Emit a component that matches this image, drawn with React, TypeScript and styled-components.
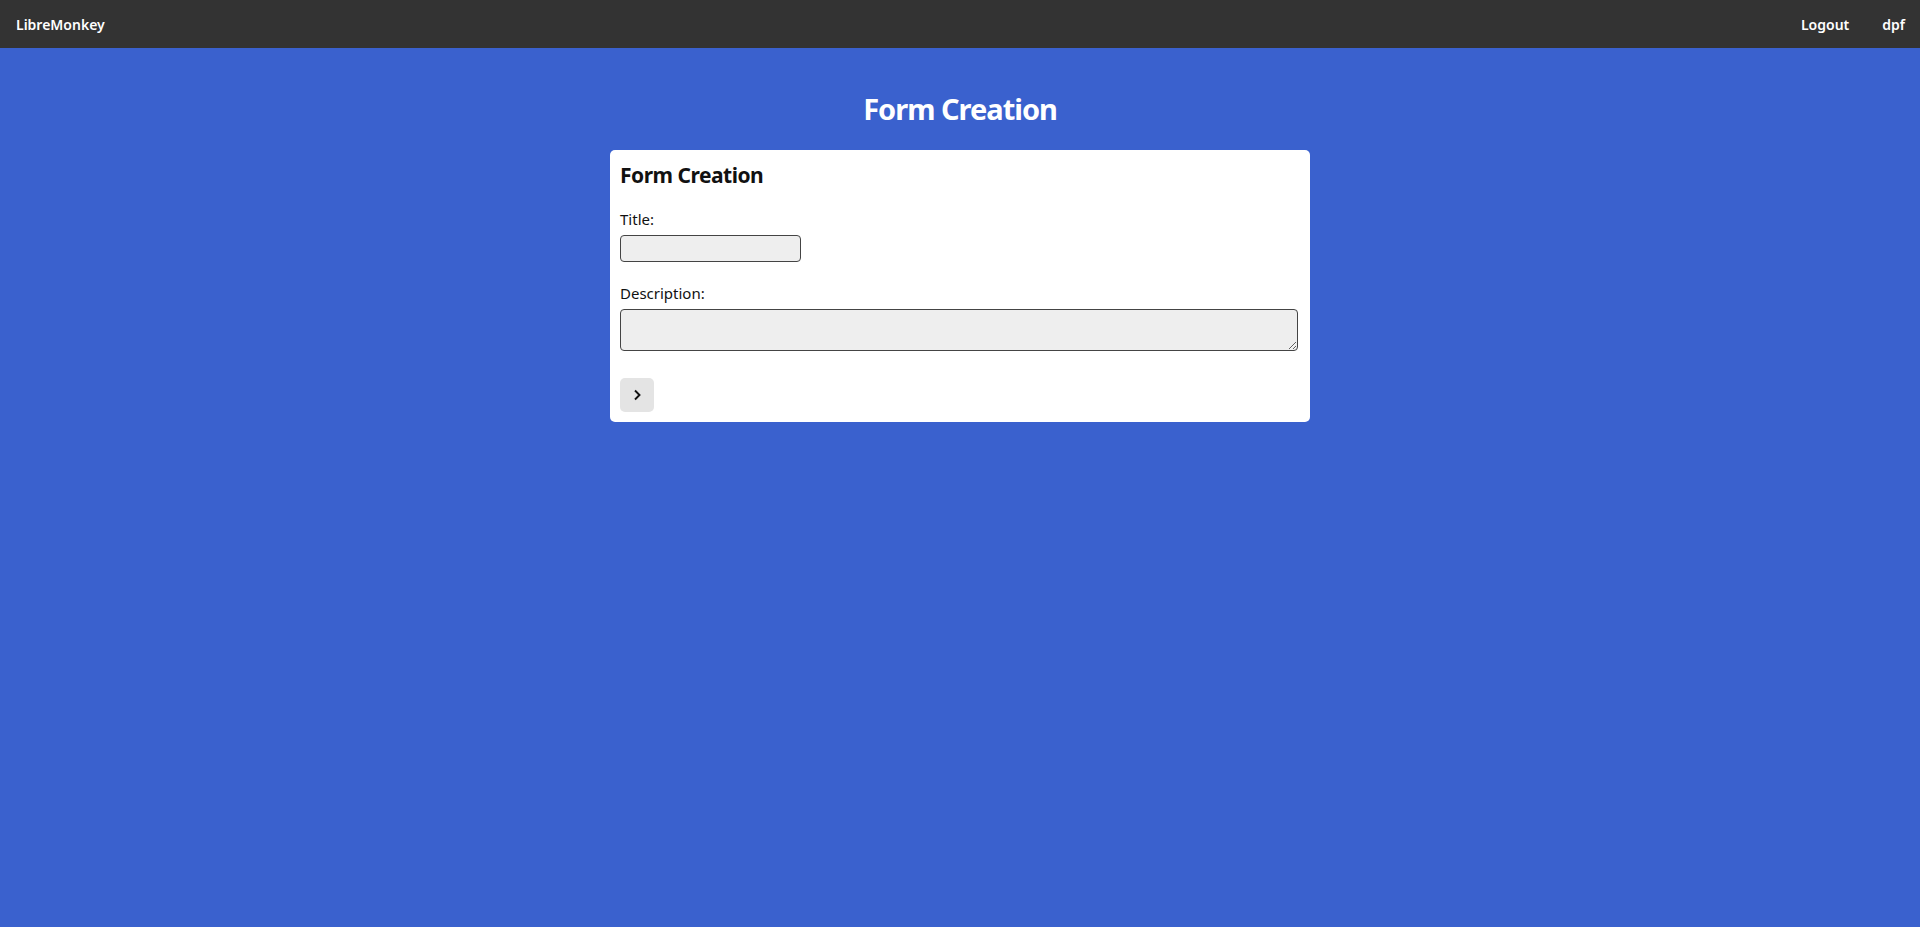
import * as React from "react";
import styled, { createGlobalStyle } from "styled-components";

// global
const GlobalStyle = createGlobalStyle`
  html, body {
    margin: 0;
    padding: 0;
    background-color: #3a61ce;
    font-family: "Noto Sans", "Open Sans", sans-serif;
  }
`;

// styles
const NavBar = styled.nav`
  display: flex;
  align-items: center;
  justify-content: space-between;
  height: 48px;
  padding: 0 15px 0 16px;
  background-color: #333333;
  color: #ffffff;
  font-size: 14px;
  font-weight: 600;
`;

const NavLinks = styled.div`
  display: flex;
  gap: 33px;
`;

const NavLink = styled.span`
  cursor: pointer;
`;

const PageStyle = styled.main`
  display: flex;
  flex-flow: column;
  align-items: center;
`;

const PageTitle = styled.h1`
  margin: 40px 0 20px;
  font-size: 29px;
  line-height: 42px;
  font-weight: 700;
  color: #ffffff;
  letter-spacing: -1px;
`;

const Card = styled.section`
  box-sizing: border-box;
  width: 700px;
  padding: 10px;
  background-color: #ffffff;
  border-radius: 5px;
  color: #111111;
`;

const CardTitle = styled.h2`
  margin: 0 0 19px;
  font-size: 21px;
  line-height: 30px;
  font-weight: 700;
  letter-spacing: -0.5px;
`;

const Field = styled.div<{ $last?: boolean }>`
  display: flex;
  flex-flow: column;
  align-items: flex-start;
  margin-bottom: ${(p) => (p.$last ? "0" : "21px")};
`;

const Label = styled.label`
  font-size: 15px;
  line-height: 20px;
  margin-bottom: 6px;
`;

const TextInput = styled.input`
  box-sizing: border-box;
  width: 181px;
  height: 27px;
  border: 1px solid #444444;
  border-radius: 4px;
  background-color: #eeeeee;
  outline: none;
`;

const TextArea = styled.textarea`
  box-sizing: border-box;
  width: calc(100% - 2px);
  height: 42px;
  border: 1px solid #444444;
  border-radius: 4px;
  background-color: #eeeeee;
  outline: none;
  font-family: inherit;
`;

const NextButton = styled.button`
  display: flex;
  align-items: center;
  justify-content: center;
  width: 34px;
  height: 34px;
  margin-top: 27px;
  padding: 0;
  border: none;
  border-radius: 5px;
  background-color: #e4e4e4;
  cursor: pointer;
`;

// markup
const App = () => {
  return (
    <>
      <GlobalStyle />
      <NavBar>
        <NavLink>LibreMonkey</NavLink>
        <NavLinks>
          <NavLink>Logout</NavLink>
          <NavLink>dpf</NavLink>
        </NavLinks>
      </NavBar>
      <PageStyle>
        <PageTitle>Form Creation</PageTitle>
        <Card>
          <CardTitle>Form Creation</CardTitle>
          <Field>
            <Label>Title:</Label>
            <TextInput type="text" />
          </Field>
          <Field $last>
            <Label>Description:</Label>
            <TextArea />
          </Field>
          <NextButton aria-label="Next">
            <svg width="14" height="14" viewBox="0 0 14 14">
              <path d="M5 2.5 L9.5 7 L5 11.5" fill="none" stroke="#111" strokeWidth="1.9" />
            </svg>
          </NextButton>
        </Card>
      </PageStyle>
    </>
  );
};

export default App;
